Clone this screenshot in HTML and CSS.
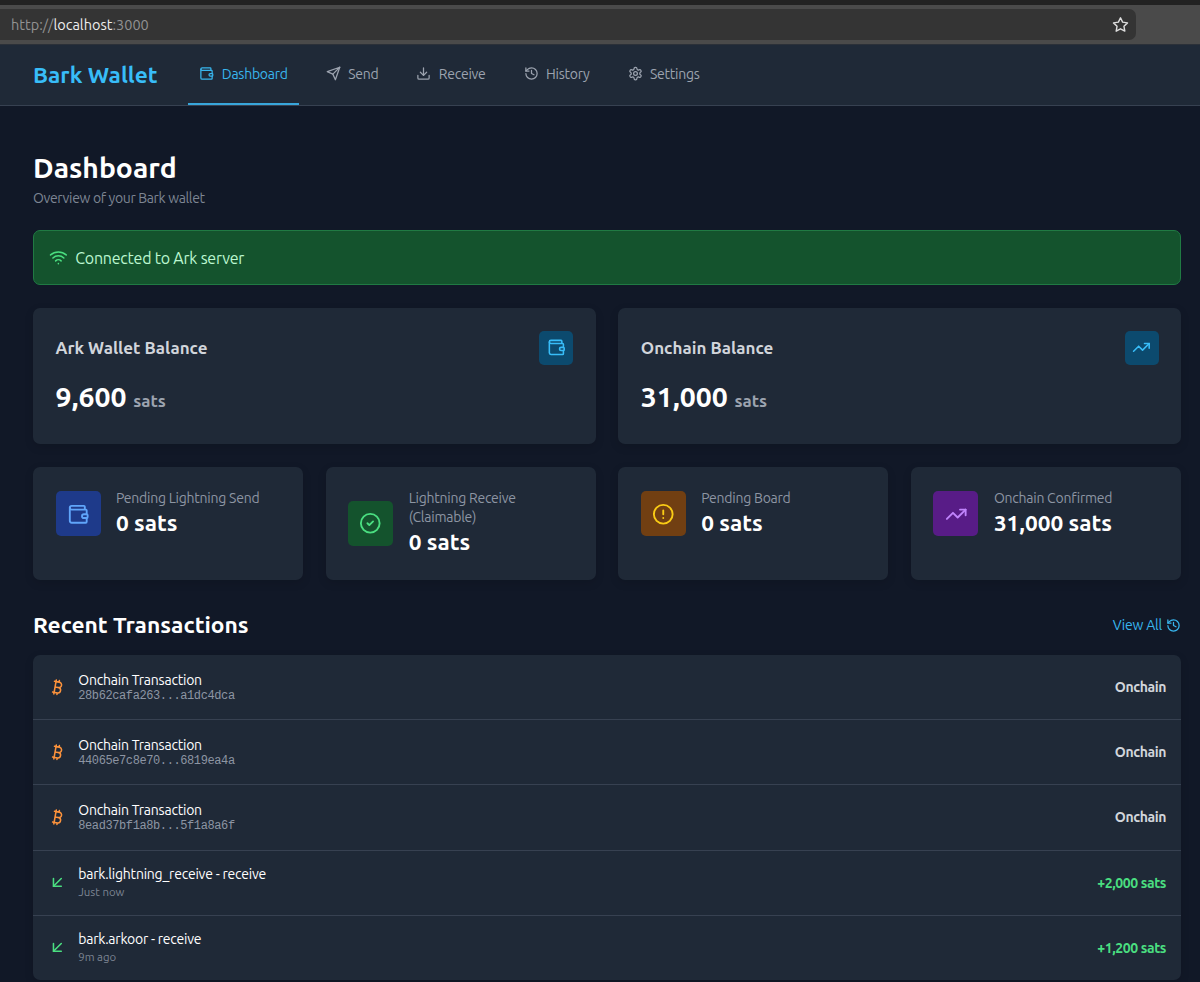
FILE: index.html
```html
<!DOCTYPE html>
<html lang="en">
<head>
<meta charset="utf-8">
<title>Bark Wallet</title>
<link rel="stylesheet" href="styles.css">
</head>
<body>
<svg class="defs" width="0" height="0">
  <symbol id="wallet" viewBox="0 0 24 24"><path d="M19 7V4a1 1 0 0 0-1-1H5a2 2 0 0 0 0 4h15a1 1 0 0 1 1 1v4h-3a2 2 0 0 0 0 4h3a1 1 0 0 0 1-1v-2a1 1 0 0 0-1-1"/><path d="M3 5v14a2 2 0 0 0 2 2h15a1 1 0 0 0 1-1v-4"/></symbol>
  <symbol id="send" viewBox="0 0 24 24"><path d="m22 2-7 20-4-9-9-4Z"/><path d="M22 2 11 13"/></symbol>
  <symbol id="download" viewBox="0 0 24 24"><path d="M21 15v4a2 2 0 0 1-2 2H5a2 2 0 0 1-2-2v-4"/><path d="m7 10 5 5 5-5"/><path d="M12 15V3"/></symbol>
  <symbol id="history" viewBox="0 0 24 24"><path d="M3 12a9 9 0 1 0 9-9 9.75 9.75 0 0 0-6.74 2.74L3 8"/><path d="M3 3v5h5"/><path d="M12 7v5l4 2"/></symbol>
  <symbol id="settings" viewBox="0 0 24 24"><path d="M12.22 2h-.44a2 2 0 0 0-2 2v.18a2 2 0 0 1-1 1.73l-.43.25a2 2 0 0 1-2 0l-.15-.08a2 2 0 0 0-2.73.73l-.22.38a2 2 0 0 0 .73 2.73l.15.1a2 2 0 0 1 1 1.72v.51a2 2 0 0 1-1 1.74l-.15.09a2 2 0 0 0-.73 2.73l.22.38a2 2 0 0 0 2.73.73l.15-.08a2 2 0 0 1 2 0l.43.25a2 2 0 0 1 1 1.73V20a2 2 0 0 0 2 2h.44a2 2 0 0 0 2-2v-.18a2 2 0 0 1 1-1.73l.43-.25a2 2 0 0 1 2 0l.15.08a2 2 0 0 0 2.73-.73l.22-.39a2 2 0 0 0-.73-2.73l-.15-.08a2 2 0 0 1-1-1.74v-.5a2 2 0 0 1 1-1.74l.15-.09a2 2 0 0 0 .73-2.73l-.22-.38a2 2 0 0 0-2.73-.73l-.15.08a2 2 0 0 1-2 0l-.43-.25a2 2 0 0 1-1-1.73V4a2 2 0 0 0-2-2z"/><circle cx="12" cy="12" r="3"/></symbol>
  <symbol id="wifi" viewBox="0 0 24 24"><path d="M12 20h.01"/><path d="M2 8.82a15 15 0 0 1 20 0"/><path d="M5 12.859a10 10 0 0 1 14 0"/><path d="M8.5 16.429a5 5 0 0 1 7 0"/></symbol>
  <symbol id="trend" viewBox="0 0 24 24"><path d="m22 7-8.5 8.5-5-5L2 17"/><path d="M16 7h6v6"/></symbol>
  <symbol id="check" viewBox="0 0 24 24"><circle cx="12" cy="12" r="10"/><path d="m9 12 2 2 4-4"/></symbol>
  <symbol id="alert" viewBox="0 0 24 24"><circle cx="12" cy="12" r="10"/><path d="M12 8v4"/><path d="M12 16h.01"/></symbol>
  <symbol id="bitcoin" viewBox="0 0 24 24"><path d="M11.767 19.089c4.924.868 6.14-6.025 1.216-6.894m-1.216 6.894L5.86 18.047m5.908 1.042-.347 1.97m1.563-8.864c4.924.869 6.14-6.025 1.215-6.893m-1.215 6.893-3.94-.694m5.155-6.2L8.29 4.26m5.908 1.042.348-1.97M7.48 20.364l3.126-17.727"/></symbol>
  <symbol id="incoming" viewBox="0 0 24 24"><path d="M17 7 7 17"/><path d="M17 17H7V7"/></symbol>
  <symbol id="star" viewBox="0 0 24 24"><path d="m12 2.5 3 6.2 6.9 1-5 4.8 1.2 6.9-6.1-3.3-6.1 3.3 1.2-6.9-5-4.8 6.9-1z"/></symbol>
</svg>

<div class="browser">
  <div class="address">
    <span class="url">http://<b>localhost</b>:3000</span>
    <svg class="icon star"><use href="#star"/></svg>
  </div>
</div>

<header class="header">
  <div class="brand">Bark Wallet</div>
  <nav class="nav">
    <a class="nav-item active"><svg class="icon i15"><use href="#wallet"/></svg><span>Dashboard</span></a>
    <a class="nav-item"><svg class="icon i15"><use href="#send"/></svg><span>Send</span></a>
    <a class="nav-item"><svg class="icon i15"><use href="#download"/></svg><span>Receive</span></a>
    <a class="nav-item"><svg class="icon i15"><use href="#history"/></svg><span>History</span></a>
    <a class="nav-item"><svg class="icon i15"><use href="#settings"/></svg><span>Settings</span></a>
  </nav>
</header>

<main class="main">
  <h1 class="title">Dashboard</h1>
  <p class="subtitle">Overview of your Bark wallet</p>

  <div class="status"><svg class="icon i19"><use href="#wifi"/></svg><span>Connected to Ark server</span></div>

  <section class="balances">
    <div class="card balance">
      <div class="balance-head"><h2 class="label">Ark Wallet Balance</h2><div class="badge"><svg class="icon i19"><use href="#wallet"/></svg></div></div>
      <div class="amount">9,600 <span class="unit">sats</span></div>
    </div>
    <div class="card balance">
      <div class="balance-head"><h2 class="label">Onchain Balance</h2><div class="badge"><svg class="icon i19"><use href="#trend"/></svg></div></div>
      <div class="amount">31,000 <span class="unit">sats</span></div>
    </div>
  </section>

  <section class="stats">
    <div class="card stat"><div class="tile blue"><svg class="icon i23"><use href="#wallet"/></svg></div><div><div class="stat-name">Pending Lightning Send</div><div class="stat-value">0 sats</div></div></div>
    <div class="card stat"><div class="tile green"><svg class="icon i23"><use href="#check"/></svg></div><div><div class="stat-name">Lightning Receive<br>(Claimable)</div><div class="stat-value">0 sats</div></div></div>
    <div class="card stat"><div class="tile amber"><svg class="icon i23"><use href="#alert"/></svg></div><div><div class="stat-name">Pending Board</div><div class="stat-value">0 sats</div></div></div>
    <div class="card stat"><div class="tile purple"><svg class="icon i23"><use href="#trend"/></svg></div><div><div class="stat-name">Onchain Confirmed</div><div class="stat-value">31,000 sats</div></div></div>
  </section>

  <div class="section-head"><h2 class="section-title">Recent Transactions</h2><a class="view-all"><span>View All</span><svg class="icon i15"><use href="#history"/></svg></a></div>

  <ul class="card list">
    <li class="tx"><svg class="icon i19 orange"><use href="#bitcoin"/></svg><div class="tx-info"><div class="tx-name">Onchain Transaction</div><div class="hash">28b62cafa263...a1dc4dca</div></div><div class="tx-side">Onchain</div></li>
    <li class="tx"><svg class="icon i19 orange"><use href="#bitcoin"/></svg><div class="tx-info"><div class="tx-name">Onchain Transaction</div><div class="hash">44065e7c8e70...6819ea4a</div></div><div class="tx-side">Onchain</div></li>
    <li class="tx"><svg class="icon i19 orange"><use href="#bitcoin"/></svg><div class="tx-info"><div class="tx-name">Onchain Transaction</div><div class="hash">8ead37bf1a8b...5f1a8a6f</div></div><div class="tx-side">Onchain</div></li>
    <li class="tx"><svg class="icon i19 lime"><use href="#incoming"/></svg><div class="tx-info"><div class="tx-name">bark.lightning_receive - receive</div><div class="time">Just now</div></div><div class="tx-side lime">+2,000 sats</div></li>
    <li class="tx"><svg class="icon i19 lime"><use href="#incoming"/></svg><div class="tx-info"><div class="tx-name">bark.arkoor - receive</div><div class="time">9m ago</div></div><div class="tx-side lime">+1,200 sats</div></li>
  </ul>
</main>
</body>
</html>
```
FILE: styles.css
```css
* { box-sizing: border-box; margin: 0; padding: 0; }
body {
  height: 982px;
  overflow: hidden;
  background: #111827;
  color: #fff;
  font-family: Ubuntu, "Noto Sans", sans-serif;
  font-size: 14px;
}
.defs { position: absolute; }
.icon {
  flex: none;
  fill: none;
  stroke: currentColor;
  stroke-width: 2;
  stroke-linecap: round;
  stroke-linejoin: round;
}
.i15 { width: 15px; height: 15px; }
.i19 { width: 18.75px; height: 18.75px; }
.i23 { width: 22.5px; height: 22.5px; }

/* Browser toolbar */
.browser {
  height: 45px;
  padding-top: 4px;
  border-top: 5px solid #222;
  border-bottom: 1px solid #2b3038;
  background: #4a4a4a;
}
.address {
  display: flex;
  align-items: center;
  justify-content: space-between;
  width: 1136px;
  height: 31px;
  padding: 0 7px 0 11px;
  border-radius: 0 7px 7px 0;
  background: #343434;
}
.url { padding-bottom: 1px; color: #929292; font-size: 14.5px; }
.url b { color: #eee; font-weight: 400; }
.star { width: 17px; height: 17px; color: #ddd; }

/* Header */
.header {
  display: flex;
  height: 61px;
  padding-left: 33px;
  border-bottom: 1px solid #374151;
  background: #1f2937;
}
.brand {
  width: 155px;
  color: #38bdf8;
  font-size: 22.7px;
  font-weight: 600;
  line-height: 59px;
  white-space: nowrap;
}
.nav { display: flex; gap: 15.4px; letter-spacing: -0.26px; }
.nav-item {
  display: flex;
  align-items: center;
  gap: 7.5px;
  height: 60px;
  padding: 0 11.3px 3px;
  color: #9ca3af;
  white-space: nowrap;
}
.nav-item.active { padding-bottom: 1px; border-bottom: 2px solid #38a5da; color: #38b6ee; }

/* Page */
.main { padding: 44px 19px 0 33px; }
.title { font-size: 28.3px; font-weight: 600; line-height: 36px; }
.subtitle { margin-top: 2px; color: #7d8593; line-height: 20px; letter-spacing: -0.35px; }
.status {
  display: flex;
  align-items: center;
  gap: 7.5px;
  height: 55px;
  margin-top: 22px;
  padding-left: 15px;
  border: 1px solid #207a43;
  border-radius: 7px;
  background: #14532d;
  color: #4ade80;
}
.status span { color: #bbf7d0; font-size: 16px; letter-spacing: -0.23px; }
.card { border-radius: 7px; background: #1f2937; box-shadow: 0 3px 10px rgba(0, 0, 0, 0.12); }
.balances { display: grid; grid-template-columns: 1fr 1fr; gap: 22.5px; margin-top: 23px; }
.balance { height: 135.5px; padding: 22.5px; }
.balance-head { display: flex; align-items: center; justify-content: space-between; height: 34px; }
.label { color: #d1d5db; font-size: 17px; font-weight: 600; letter-spacing: 0.02px; }
.badge {
  display: grid;
  place-items: center;
  width: 34px;
  height: 34px;
  border-radius: 5px;
  background: #0c4a6e;
  color: #38bdf8;
}
.amount { margin-top: 15px; font-size: 28.4px; font-weight: 600; line-height: 33px; white-space: nowrap; }
.unit { color: #9ca3af; font-size: 17px; font-weight: 600; }

.stats { display: grid; grid-template-columns: repeat(4, 1fr); gap: 22.5px; margin-top: 23px; }
.stat { display: flex; align-items: center; gap: 15.5px; height: 113px; padding: 0 22.5px 18.5px; }
.stat:nth-child(2) { padding-bottom: 0; }
.tile { display: grid; flex: none; place-items: center; width: 45px; height: 45px; border-radius: 5px; }
.blue { background: #1e3a8a; color: #60a5fa; }
.green { background: #14532d; color: #4ade80; }
.amber { background: #713f12; color: #facc15; }
.purple { background: #581c87; color: #c084fc; }
.stat-name { color: #8d95a3; line-height: 19px; letter-spacing: -0.24px; white-space: nowrap; }
.stat-value { padding-bottom: 1px; font-size: 22.6px; font-weight: 600; line-height: 29px; white-space: nowrap; }

.section-head { display: flex; justify-content: space-between; height: 75.5px; padding-top: 15px; }
.section-title { font-size: 22.8px; font-weight: 600; line-height: 59px; }
.view-all { display: flex; align-items: center; gap: 4px; height: 61px; color: #38b6ee; letter-spacing: -0.2px; }

.list { height: 324.5px; list-style: none; }
.tx { display: flex; align-items: center; height: 65.2px; padding: 0 15px; border-bottom: 1px solid #374151; }
.tx:last-child { height: 64px; border-bottom: 0; }
.tx-info { flex: 1; margin-left: 11.5px; padding-top: 1.5px; }
.tx-name { line-height: 17px; letter-spacing: -0.22px; }
.hash { color: #8d95a3; font: 12px/15px "Liberation Mono", monospace; letter-spacing: -0.4px; }
.time { color: #7d8593; font-size: 11.4px; line-height: 18px; }
.tx-side { color: #d1d5db; font-weight: 600; letter-spacing: -0.4px; }
.orange { color: #fb923c; }
.lime, .tx-side.lime { color: #4ade80; }
```
